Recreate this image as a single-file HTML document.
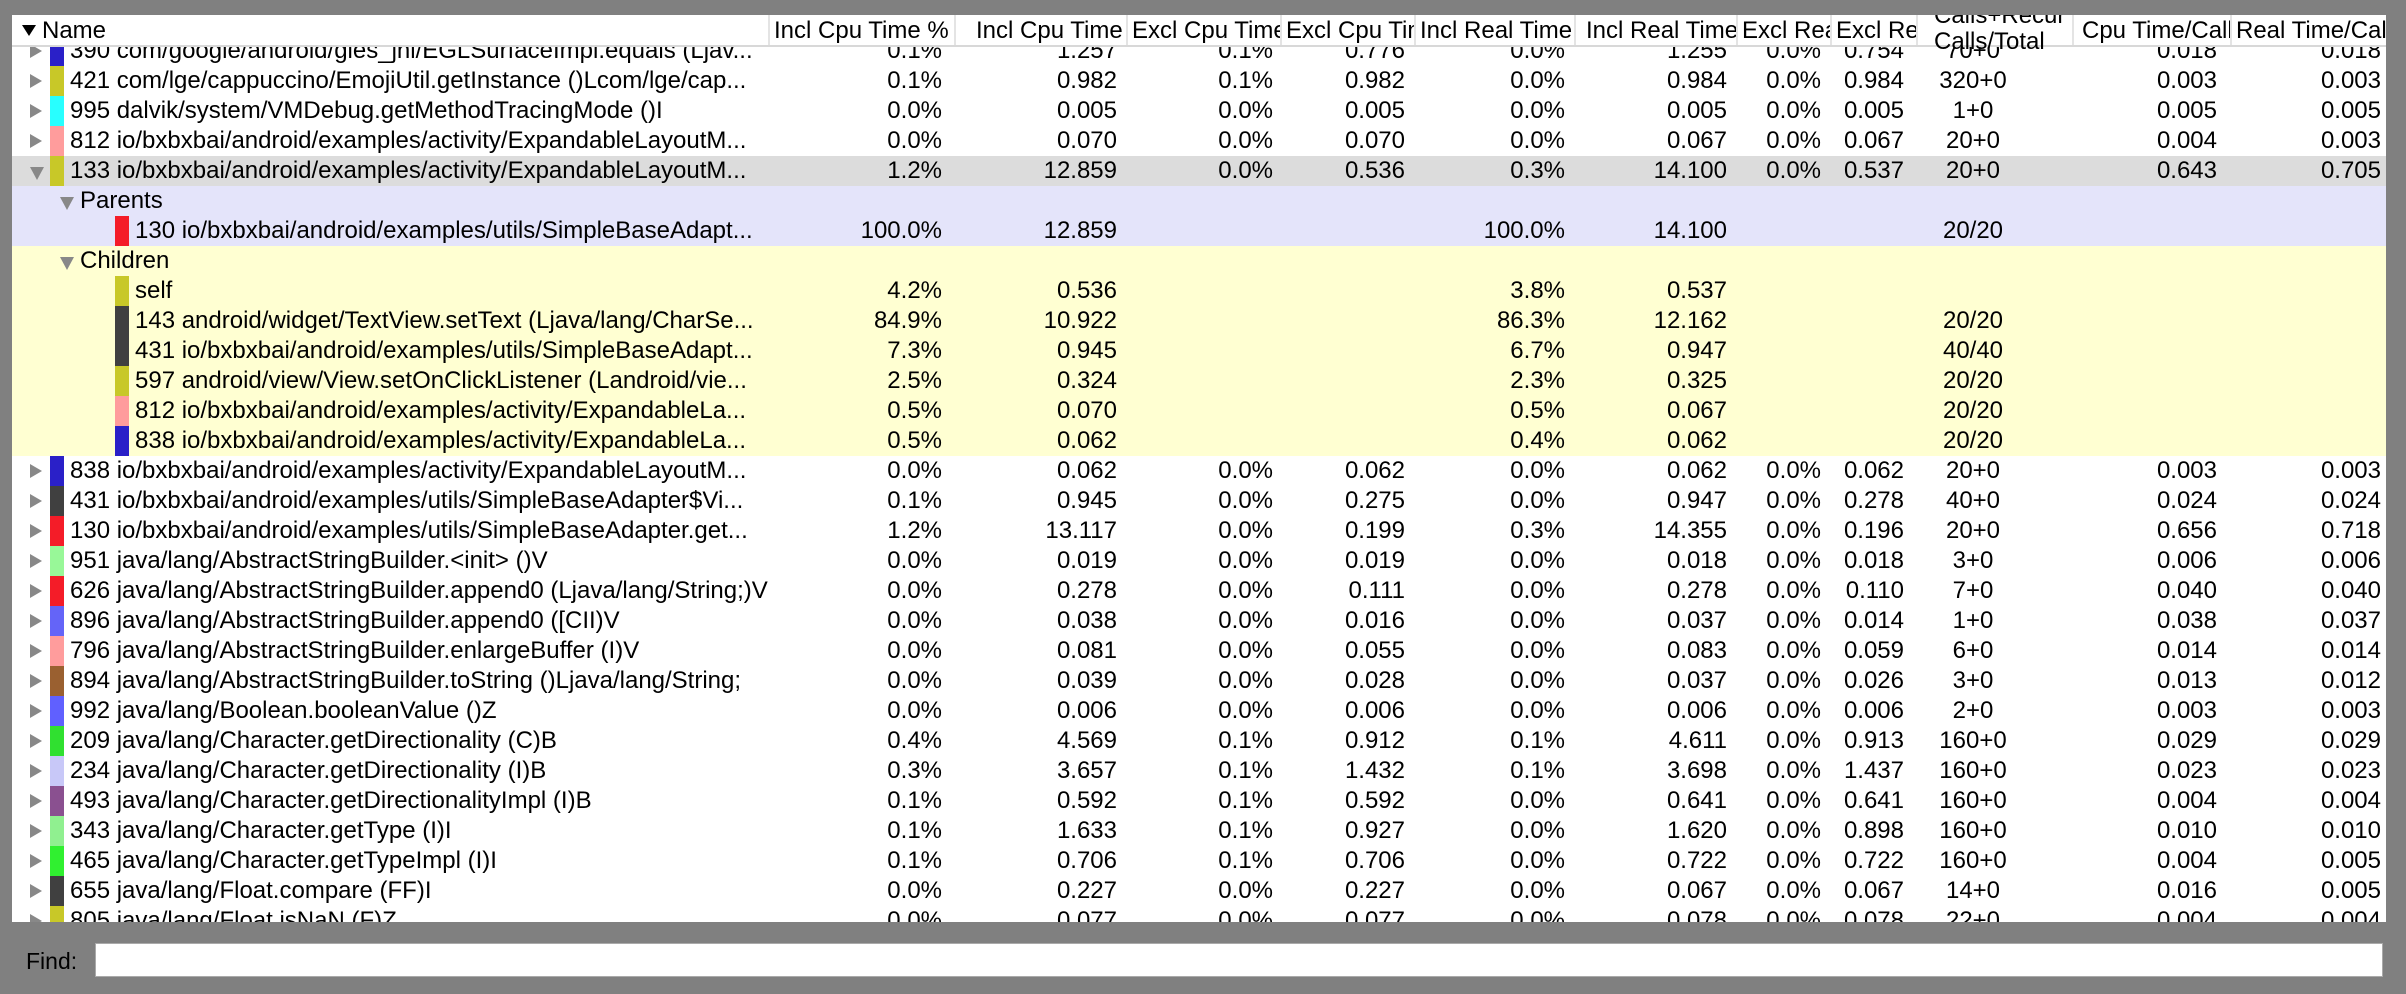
<!DOCTYPE html>
<html><head><meta charset="utf-8"><style>
*{margin:0;padding:0;box-sizing:border-box}
body{width:2406px;height:994px;background:#808080;overflow:hidden;font-family:"Liberation Sans",Arial,sans-serif;font-size:24px;color:#000;position:relative}
#tbl{position:absolute;left:12px;top:15px;width:2374px;height:907px;background:#fff;overflow:hidden}
#hdr{position:absolute;left:0;top:0;width:2374px;height:32px;background:#fff;border-bottom:2px solid #d8d8d8;z-index:2}
#hdr span{position:absolute;top:0;height:30px;line-height:32px;overflow:hidden;white-space:nowrap;border-right:2px solid #e4e4e4;padding-left:4px}
#hdr span.calls{top:-12px;height:auto;line-height:26px;overflow:visible;border-right:none;padding-left:16px}
#bd{position:absolute;left:0;top:32px;width:2374px;height:875px;overflow:hidden}
#rows{position:absolute;left:0;top:-11px;width:2374px}
.r{position:relative;height:30px;line-height:30px;white-space:nowrap}
.r span{position:absolute;top:0}
.t{left:18px;width:0;height:0;top:8px!important;border-top:7px solid transparent;border-bottom:7px solid transparent;border-left:12px solid #888}
.td{left:18px;top:11px!important;width:0;height:0;border-left:7px solid transparent;border-right:7px solid transparent;border-top:13px solid #888}
.b{left:38px;width:14px;height:30px}
.n{left:58px}
.cb{left:103px;width:14px;height:30px}
.cn{left:123px}
.c1,.c2,.c3,.c4,.c5,.c6,.c7,.c8,.c10,.c11{text-align:right}
.c1{left:760px;width:170px}.c2{left:960px;width:145px}.c3{left:1130px;width:131px}.c4{left:1290px;width:103px}
.c5{left:1420px;width:133px}.c6{left:1580px;width:135px}.c7{left:1740px;width:69px}.c8{left:1825px;width:67px}
.c9{left:1905px;width:112px;text-align:center}.c10{left:2080px;width:125px}.c11{left:2230px;width:139px}
.sel{background:#dcdcdc}.par{background:#e4e4fa}.chi{background:#ffffd2}
#find{position:absolute;left:26px;top:944px;line-height:34px;font-size:23px}
#inp{position:absolute;left:95px;top:943px;width:2288px;height:34px;background:#fff;border:1px solid #aaa}
</style></head><body>
<div id="tbl">
<div id="hdr">
<span style="left:0;width:758px;padding-left:30px">Name<i style="position:absolute;left:10px;top:10px;border-left:7px solid transparent;border-right:7px solid transparent;border-top:11px solid #000"></i></span>
<span style="left:758px;width:186px">Incl Cpu Time %</span>
<span style="left:944px;width:172px;padding-left:20px">Incl Cpu Time</span>
<span style="left:1116px;width:154px">Excl Cpu Time</span>
<span style="left:1270px;width:134px">Excl Cpu Time</span>
<span style="left:1404px;width:160px">Incl Real Time</span>
<span style="left:1564px;width:162px;padding-left:10px">Incl Real Time</span>
<span style="left:1726px;width:94px">Excl Real</span>
<span style="left:1820px;width:86px">Excl Real</span>
<span class="calls" style="left:1906px;width:154px">Calls+Recur<br>Calls/Total</span>
<span style="left:2060px;width:160px;padding-left:8px;border-left:2px solid #e4e4e4">Cpu Time/Call</span>
<span style="left:2220px;width:154px;border-right:none">Real Time/Call</span>
</div>
<div id="bd"><div id="rows">
<div class="r"><span class="t"></span><span class="b" style="background:#2a20c8"></span><span class="n">390 com/google/android/gles_jni/EGLSurfaceImpl.equals (Ljav...</span><span class="c1">0.1%</span><span class="c2">1.257</span><span class="c3">0.1%</span><span class="c4">0.776</span><span class="c5">0.0%</span><span class="c6">1.255</span><span class="c7">0.0%</span><span class="c8">0.754</span><span class="c9">70+0</span><span class="c10">0.018</span><span class="c11">0.018</span></div>
<div class="r"><span class="t"></span><span class="b" style="background:#c8c828"></span><span class="n">421 com/lge/cappuccino/EmojiUtil.getInstance ()Lcom/lge/cap...</span><span class="c1">0.1%</span><span class="c2">0.982</span><span class="c3">0.1%</span><span class="c4">0.982</span><span class="c5">0.0%</span><span class="c6">0.984</span><span class="c7">0.0%</span><span class="c8">0.984</span><span class="c9">320+0</span><span class="c10">0.003</span><span class="c11">0.003</span></div>
<div class="r"><span class="t"></span><span class="b" style="background:#28ffff"></span><span class="n">995 dalvik/system/VMDebug.getMethodTracingMode ()I</span><span class="c1">0.0%</span><span class="c2">0.005</span><span class="c3">0.0%</span><span class="c4">0.005</span><span class="c5">0.0%</span><span class="c6">0.005</span><span class="c7">0.0%</span><span class="c8">0.005</span><span class="c9">1+0</span><span class="c10">0.005</span><span class="c11">0.005</span></div>
<div class="r"><span class="t"></span><span class="b" style="background:#ff9c9c"></span><span class="n">812 io/bxbxbai/android/examples/activity/ExpandableLayoutM...</span><span class="c1">0.0%</span><span class="c2">0.070</span><span class="c3">0.0%</span><span class="c4">0.070</span><span class="c5">0.0%</span><span class="c6">0.067</span><span class="c7">0.0%</span><span class="c8">0.067</span><span class="c9">20+0</span><span class="c10">0.004</span><span class="c11">0.003</span></div>
<div class="r sel"><span class="td"></span><span class="b" style="background:#c8c828"></span><span class="n">133 io/bxbxbai/android/examples/activity/ExpandableLayoutM...</span><span class="c1">1.2%</span><span class="c2">12.859</span><span class="c3">0.0%</span><span class="c4">0.536</span><span class="c5">0.3%</span><span class="c6">14.100</span><span class="c7">0.0%</span><span class="c8">0.537</span><span class="c9">20+0</span><span class="c10">0.643</span><span class="c11">0.705</span></div>
<div class="r par"><span class="td" style="left:48px"></span><span style="left:68px">Parents</span></div>
<div class="r par"><span class="cb" style="background:#f41c28"></span><span class="cn">130 io/bxbxbai/android/examples/utils/SimpleBaseAdapt...</span><span class="c1">100.0%</span><span class="c2">12.859</span><span class="c5">100.0%</span><span class="c6">14.100</span><span class="c9">20/20</span></div>
<div class="r chi"><span class="td" style="left:48px"></span><span style="left:68px">Children</span></div>
<div class="r chi"><span class="cb" style="background:#c8c828"></span><span class="cn">self</span><span class="c1">4.2%</span><span class="c2">0.536</span><span class="c5">3.8%</span><span class="c6">0.537</span></div>
<div class="r chi"><span class="cb" style="background:#404040"></span><span class="cn">143 android/widget/TextView.setText (Ljava/lang/CharSe...</span><span class="c1">84.9%</span><span class="c2">10.922</span><span class="c5">86.3%</span><span class="c6">12.162</span><span class="c9">20/20</span></div>
<div class="r chi"><span class="cb" style="background:#404040"></span><span class="cn">431 io/bxbxbai/android/examples/utils/SimpleBaseAdapt...</span><span class="c1">7.3%</span><span class="c2">0.945</span><span class="c5">6.7%</span><span class="c6">0.947</span><span class="c9">40/40</span></div>
<div class="r chi"><span class="cb" style="background:#c8c828"></span><span class="cn">597 android/view/View.setOnClickListener (Landroid/vie...</span><span class="c1">2.5%</span><span class="c2">0.324</span><span class="c5">2.3%</span><span class="c6">0.325</span><span class="c9">20/20</span></div>
<div class="r chi"><span class="cb" style="background:#ff9c9c"></span><span class="cn">812 io/bxbxbai/android/examples/activity/ExpandableLa...</span><span class="c1">0.5%</span><span class="c2">0.070</span><span class="c5">0.5%</span><span class="c6">0.067</span><span class="c9">20/20</span></div>
<div class="r chi"><span class="cb" style="background:#2a20c8"></span><span class="cn">838 io/bxbxbai/android/examples/activity/ExpandableLa...</span><span class="c1">0.5%</span><span class="c2">0.062</span><span class="c5">0.4%</span><span class="c6">0.062</span><span class="c9">20/20</span></div>
<div class="r"><span class="t"></span><span class="b" style="background:#2a20c8"></span><span class="n">838 io/bxbxbai/android/examples/activity/ExpandableLayoutM...</span><span class="c1">0.0%</span><span class="c2">0.062</span><span class="c3">0.0%</span><span class="c4">0.062</span><span class="c5">0.0%</span><span class="c6">0.062</span><span class="c7">0.0%</span><span class="c8">0.062</span><span class="c9">20+0</span><span class="c10">0.003</span><span class="c11">0.003</span></div>
<div class="r"><span class="t"></span><span class="b" style="background:#404040"></span><span class="n">431 io/bxbxbai/android/examples/utils/SimpleBaseAdapter$Vi...</span><span class="c1">0.1%</span><span class="c2">0.945</span><span class="c3">0.0%</span><span class="c4">0.275</span><span class="c5">0.0%</span><span class="c6">0.947</span><span class="c7">0.0%</span><span class="c8">0.278</span><span class="c9">40+0</span><span class="c10">0.024</span><span class="c11">0.024</span></div>
<div class="r"><span class="t"></span><span class="b" style="background:#f41c28"></span><span class="n">130 io/bxbxbai/android/examples/utils/SimpleBaseAdapter.get...</span><span class="c1">1.2%</span><span class="c2">13.117</span><span class="c3">0.0%</span><span class="c4">0.199</span><span class="c5">0.3%</span><span class="c6">14.355</span><span class="c7">0.0%</span><span class="c8">0.196</span><span class="c9">20+0</span><span class="c10">0.656</span><span class="c11">0.718</span></div>
<div class="r"><span class="t"></span><span class="b" style="background:#98f898"></span><span class="n">951 java/lang/AbstractStringBuilder.&lt;init&gt; ()V</span><span class="c1">0.0%</span><span class="c2">0.019</span><span class="c3">0.0%</span><span class="c4">0.019</span><span class="c5">0.0%</span><span class="c6">0.018</span><span class="c7">0.0%</span><span class="c8">0.018</span><span class="c9">3+0</span><span class="c10">0.006</span><span class="c11">0.006</span></div>
<div class="r"><span class="t"></span><span class="b" style="background:#f41c28"></span><span class="n">626 java/lang/AbstractStringBuilder.append0 (Ljava/lang/String;)V</span><span class="c1">0.0%</span><span class="c2">0.278</span><span class="c3">0.0%</span><span class="c4">0.111</span><span class="c5">0.0%</span><span class="c6">0.278</span><span class="c7">0.0%</span><span class="c8">0.110</span><span class="c9">7+0</span><span class="c10">0.040</span><span class="c11">0.040</span></div>
<div class="r"><span class="t"></span><span class="b" style="background:#6464f8"></span><span class="n">896 java/lang/AbstractStringBuilder.append0 ([CII)V</span><span class="c1">0.0%</span><span class="c2">0.038</span><span class="c3">0.0%</span><span class="c4">0.016</span><span class="c5">0.0%</span><span class="c6">0.037</span><span class="c7">0.0%</span><span class="c8">0.014</span><span class="c9">1+0</span><span class="c10">0.038</span><span class="c11">0.037</span></div>
<div class="r"><span class="t"></span><span class="b" style="background:#ff9c9c"></span><span class="n">796 java/lang/AbstractStringBuilder.enlargeBuffer (I)V</span><span class="c1">0.0%</span><span class="c2">0.081</span><span class="c3">0.0%</span><span class="c4">0.055</span><span class="c5">0.0%</span><span class="c6">0.083</span><span class="c7">0.0%</span><span class="c8">0.059</span><span class="c9">6+0</span><span class="c10">0.014</span><span class="c11">0.014</span></div>
<div class="r"><span class="t"></span><span class="b" style="background:#9a6030"></span><span class="n">894 java/lang/AbstractStringBuilder.toString ()Ljava/lang/String;</span><span class="c1">0.0%</span><span class="c2">0.039</span><span class="c3">0.0%</span><span class="c4">0.028</span><span class="c5">0.0%</span><span class="c6">0.037</span><span class="c7">0.0%</span><span class="c8">0.026</span><span class="c9">3+0</span><span class="c10">0.013</span><span class="c11">0.012</span></div>
<div class="r"><span class="t"></span><span class="b" style="background:#6060ff"></span><span class="n">992 java/lang/Boolean.booleanValue ()Z</span><span class="c1">0.0%</span><span class="c2">0.006</span><span class="c3">0.0%</span><span class="c4">0.006</span><span class="c5">0.0%</span><span class="c6">0.006</span><span class="c7">0.0%</span><span class="c8">0.006</span><span class="c9">2+0</span><span class="c10">0.003</span><span class="c11">0.003</span></div>
<div class="r"><span class="t"></span><span class="b" style="background:#30e030"></span><span class="n">209 java/lang/Character.getDirectionality (C)B</span><span class="c1">0.4%</span><span class="c2">4.569</span><span class="c3">0.1%</span><span class="c4">0.912</span><span class="c5">0.1%</span><span class="c6">4.611</span><span class="c7">0.0%</span><span class="c8">0.913</span><span class="c9">160+0</span><span class="c10">0.029</span><span class="c11">0.029</span></div>
<div class="r"><span class="t"></span><span class="b" style="background:#c8c8f8"></span><span class="n">234 java/lang/Character.getDirectionality (I)B</span><span class="c1">0.3%</span><span class="c2">3.657</span><span class="c3">0.1%</span><span class="c4">1.432</span><span class="c5">0.1%</span><span class="c6">3.698</span><span class="c7">0.0%</span><span class="c8">1.437</span><span class="c9">160+0</span><span class="c10">0.023</span><span class="c11">0.023</span></div>
<div class="r"><span class="t"></span><span class="b" style="background:#8a5090"></span><span class="n">493 java/lang/Character.getDirectionalityImpl (I)B</span><span class="c1">0.1%</span><span class="c2">0.592</span><span class="c3">0.1%</span><span class="c4">0.592</span><span class="c5">0.0%</span><span class="c6">0.641</span><span class="c7">0.0%</span><span class="c8">0.641</span><span class="c9">160+0</span><span class="c10">0.004</span><span class="c11">0.004</span></div>
<div class="r"><span class="t"></span><span class="b" style="background:#90f090"></span><span class="n">343 java/lang/Character.getType (I)I</span><span class="c1">0.1%</span><span class="c2">1.633</span><span class="c3">0.1%</span><span class="c4">0.927</span><span class="c5">0.0%</span><span class="c6">1.620</span><span class="c7">0.0%</span><span class="c8">0.898</span><span class="c9">160+0</span><span class="c10">0.010</span><span class="c11">0.010</span></div>
<div class="r"><span class="t"></span><span class="b" style="background:#30f030"></span><span class="n">465 java/lang/Character.getTypeImpl (I)I</span><span class="c1">0.1%</span><span class="c2">0.706</span><span class="c3">0.1%</span><span class="c4">0.706</span><span class="c5">0.0%</span><span class="c6">0.722</span><span class="c7">0.0%</span><span class="c8">0.722</span><span class="c9">160+0</span><span class="c10">0.004</span><span class="c11">0.005</span></div>
<div class="r"><span class="t"></span><span class="b" style="background:#404040"></span><span class="n">655 java/lang/Float.compare (FF)I</span><span class="c1">0.0%</span><span class="c2">0.227</span><span class="c3">0.0%</span><span class="c4">0.227</span><span class="c5">0.0%</span><span class="c6">0.067</span><span class="c7">0.0%</span><span class="c8">0.067</span><span class="c9">14+0</span><span class="c10">0.016</span><span class="c11">0.005</span></div>
<div class="r"><span class="t"></span><span class="b" style="background:#c8c828"></span><span class="n">805 java/lang/Float.isNaN (F)Z</span><span class="c1">0.0%</span><span class="c2">0.077</span><span class="c3">0.0%</span><span class="c4">0.077</span><span class="c5">0.0%</span><span class="c6">0.078</span><span class="c7">0.0%</span><span class="c8">0.078</span><span class="c9">22+0</span><span class="c10">0.004</span><span class="c11">0.004</span></div>
</div></div>
</div>
<div id="find">Find:</div>
<div id="inp"></div>
</body></html>
